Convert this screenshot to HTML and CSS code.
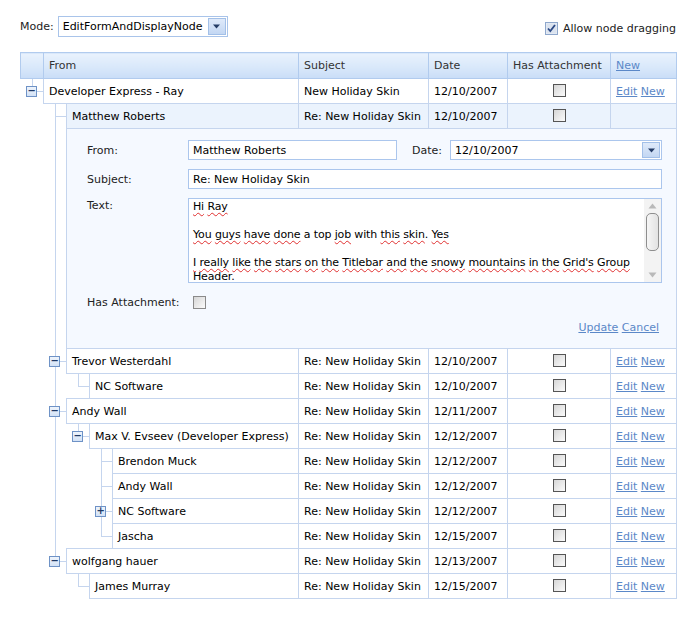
FILE: index.html
```html
<!DOCTYPE html>
<html>
<head>
<meta charset="utf-8">
<link rel="stylesheet" href="styles.css">
</head>
<body>
<div class="topbar">
  <div class="mode">
    <span class="lbl">Mode:</span>
    <div class="combo">
      <span class="combo-text">EditFormAndDisplayNode</span>
      <span class="ddbtn"><svg width="9" height="5" viewBox="0 0 9 5"><path d="M1 0.5h7l-3.5 4z" fill="#253c66"/></svg></span>
    </div>
  </div>
  <label class="drag">
    <span class="chk-checked"><svg width="13" height="13" viewBox="0 0 13 13"><rect x="0.5" y="0.5" width="12" height="12" fill="#e9eef6" stroke="#8ea7cc"/><rect x="1.5" y="1.5" width="10" height="10" fill="#dbe3ef"/><path d="M3 6.5l2.3 2.5 4.7-6" fill="none" stroke="#2c4a86" stroke-width="1.8"/></svg></span>
    <span>Allow node dragging</span>
  </label>
</div>

<table class="tree">
  <colgroup>
    <col class="c23"><col class="c23"><col class="c23"><col class="c23">
    <col class="cfrom"><col class="csub"><col class="cdate"><col class="catt"><col class="cact">
  </colgroup>
  <thead>
    <tr>
      <th class="hfirst"></th>
      <th colspan="4">From</th>
      <th>Subject</th>
      <th>Date</th>
      <th>Has Attachment</th>
      <th><a class="lnk" href="#">New</a></th>
    </tr>
  </thead>
  <tbody>
    <tr>
      <td class="ind e"><span class="btn">&#8722;</span></td>
      <td class="d" colspan="4">Developer Express - Ray</td>
      <td class="d">New Holiday Skin</td>
      <td class="d">12/10/2007</td>
      <td class="d cb"><span class="chk"></span></td>
      <td class="d"><a class="lnk" href="#">Edit</a> <a class="lnk" href="#">New</a></td>
    </tr>
    <tr class="editing">
      <td class="ind"></td>
      <td class="ind t"></td>
      <td class="d sel" colspan="3">Matthew Roberts</td>
      <td class="d sel">Re: New Holiday Skin</td>
      <td class="d sel">12/10/2007</td>
      <td class="d sel cb"><span class="chk"></span></td>
      <td class="d sel"></td>
    </tr>
    <tr>
      <td class="ind"></td>
      <td class="ind v"></td>
      <td class="formcell" colspan="7">
        <div class="ef">
          <div class="flbl">From:</div>
          <div class="frow">
            <div class="inp inp-from">Matthew Roberts</div>
            <div class="flbl date-lbl">Date:</div>
            <div class="inp inp-date"><span class="dtext">12/10/2007</span><span class="ddbtn small"><svg width="9" height="5" viewBox="0 0 9 5"><path d="M1 0.5h7l-3.5 4z" fill="#253c66"/></svg></span></div>
          </div>
          <div class="flbl">Subject:</div>
          <div class="inp">Re: New Holiday Skin</div>
          <div class="flbl top">Text:</div>
          <div class="memo">
            <div class="memo-text">
              <p><span class="sp">Hi</span> <span class="sp">Ray</span></p>
              <p>&nbsp;</p>
              <p><span class="sp">You</span> <span class="sp">guys</span> <span class="sp">have</span> <span class="sp">done</span> a top <span class="sp">job</span> with <span class="sp">this</span> <span class="sp">skin</span>. <span class="sp">Yes</span></p>
              <p>&nbsp;</p>
              <p><span class="sp">I</span> <span class="sp">really</span> <span class="sp">like</span> <span class="sp">the</span> <span class="sp">stars</span> <span class="sp">on</span> <span class="sp">the</span> <span class="sp">Titlebar</span> <span class="sp">and</span> <span class="sp">the</span> <span class="sp">snowy</span> <span class="sp">mountains</span> <span class="sp">in</span> <span class="sp">the</span> <span class="sp">Grid's</span> <span class="sp">Group</span> <span class="sp">Header</span>.</p>
            </div>
            <div class="sbar">
              <svg width="9" height="6" viewBox="0 0 9 6"><path d="M0.5 5.5h8l-4-5z" fill="#b9b9b9"/></svg>
              <div class="thumb"></div>
              <div class="sgrow"></div>
              <svg width="9" height="6" viewBox="0 0 9 6"><path d="M0.5 0.5h8l-4 5z" fill="#b9b9b9"/></svg>
            </div>
          </div>
          <div class="flbl">Has Attachment:</div>
          <div class="attrow"><span class="chk light"></span></div>
          <div class="factions"><a class="lnk" href="#">Update</a> <a class="lnk" href="#">Cancel</a></div>
        </div>
      </td>
    </tr>
    <tr>
      <td class="ind"></td>
      <td class="ind t"><span class="btn">&#8722;</span></td>
      <td class="d" colspan="3">Trevor Westerdahl</td>
      <td class="d">Re: New Holiday Skin</td>
      <td class="d">12/10/2007</td>
      <td class="d cb"><span class="chk"></span></td>
      <td class="d"><a class="lnk" href="#">Edit</a> <a class="lnk" href="#">New</a></td>
    </tr>
    <tr>
      <td class="ind"></td>
      <td class="ind v"></td>
      <td class="ind e"></td>
      <td class="d" colspan="2">NC Software</td>
      <td class="d">Re: New Holiday Skin</td>
      <td class="d">12/10/2007</td>
      <td class="d cb"><span class="chk"></span></td>
      <td class="d"><a class="lnk" href="#">Edit</a> <a class="lnk" href="#">New</a></td>
    </tr>
    <tr>
      <td class="ind"></td>
      <td class="ind t"><span class="btn">&#8722;</span></td>
      <td class="d" colspan="3">Andy Wall</td>
      <td class="d">Re: New Holiday Skin</td>
      <td class="d">12/11/2007</td>
      <td class="d cb"><span class="chk"></span></td>
      <td class="d"><a class="lnk" href="#">Edit</a> <a class="lnk" href="#">New</a></td>
    </tr>
    <tr>
      <td class="ind"></td>
      <td class="ind v"></td>
      <td class="ind e"><span class="btn">&#8722;</span></td>
      <td class="d" colspan="2">Max V. Evseev (Developer Express)</td>
      <td class="d">Re: New Holiday Skin</td>
      <td class="d">12/12/2007</td>
      <td class="d cb"><span class="chk"></span></td>
      <td class="d"><a class="lnk" href="#">Edit</a> <a class="lnk" href="#">New</a></td>
    </tr>
    <tr>
      <td class="ind"></td>
      <td class="ind v"></td>
      <td class="ind"></td>
      <td class="ind t"></td>
      <td class="d">Brendon Muck</td>
      <td class="d">Re: New Holiday Skin</td>
      <td class="d">12/12/2007</td>
      <td class="d cb"><span class="chk"></span></td>
      <td class="d"><a class="lnk" href="#">Edit</a> <a class="lnk" href="#">New</a></td>
    </tr>
    <tr>
      <td class="ind"></td>
      <td class="ind v"></td>
      <td class="ind"></td>
      <td class="ind t"></td>
      <td class="d">Andy Wall</td>
      <td class="d">Re: New Holiday Skin</td>
      <td class="d">12/12/2007</td>
      <td class="d cb"><span class="chk"></span></td>
      <td class="d"><a class="lnk" href="#">Edit</a> <a class="lnk" href="#">New</a></td>
    </tr>
    <tr>
      <td class="ind"></td>
      <td class="ind v"></td>
      <td class="ind"></td>
      <td class="ind t"><span class="btn">+</span></td>
      <td class="d">NC Software</td>
      <td class="d">Re: New Holiday Skin</td>
      <td class="d">12/12/2007</td>
      <td class="d cb"><span class="chk"></span></td>
      <td class="d"><a class="lnk" href="#">Edit</a> <a class="lnk" href="#">New</a></td>
    </tr>
    <tr>
      <td class="ind"></td>
      <td class="ind v"></td>
      <td class="ind"></td>
      <td class="ind e"></td>
      <td class="d">Jascha</td>
      <td class="d">Re: New Holiday Skin</td>
      <td class="d">12/15/2007</td>
      <td class="d cb"><span class="chk"></span></td>
      <td class="d"><a class="lnk" href="#">Edit</a> <a class="lnk" href="#">New</a></td>
    </tr>
    <tr>
      <td class="ind"></td>
      <td class="ind e"><span class="btn">&#8722;</span></td>
      <td class="d" colspan="3">wolfgang hauer</td>
      <td class="d">Re: New Holiday Skin</td>
      <td class="d">12/13/2007</td>
      <td class="d cb"><span class="chk"></span></td>
      <td class="d"><a class="lnk" href="#">Edit</a> <a class="lnk" href="#">New</a></td>
    </tr>
    <tr>
      <td class="ind"></td>
      <td class="ind"></td>
      <td class="ind e"></td>
      <td class="d" colspan="2">James Murray</td>
      <td class="d">Re: New Holiday Skin</td>
      <td class="d">12/15/2007</td>
      <td class="d cb"><span class="chk"></span></td>
      <td class="d"><a class="lnk" href="#">Edit</a> <a class="lnk" href="#">New</a></td>
    </tr>
  </tbody>
</table>
</body>
</html>
```
FILE: styles.css
```css
html, body {
  margin: 0;
  background: #fff;
}
body {
  padding: 16px 17px 0 20px;
  font-family: "DejaVu Sans", Verdana, sans-serif;
  font-size: 11px;
  color: #000;
}
.topbar {
  display: flex;
  justify-content: space-between;
  align-items: center;
  height: 21px;
}
.mode {
  display: flex;
  align-items: center;
}
.lbl { color: #222; }
.combo {
  margin-left: 4px;
  width: 170px;
  height: 21px;
  box-sizing: border-box;
  border: 1px solid #a9c4ea;
  display: flex;
  align-items: center;
  justify-content: space-between;
  padding: 0 1px 0 4px;
}
.ddbtn {
  width: 18px;
  height: 17px;
  box-sizing: border-box;
  border: 1px solid #a3c0e8;
  background: linear-gradient(#dfeafa, #c3d7f3);
  display: flex;
  align-items: center;
  justify-content: center;
}
.ddbtn.small { height: 16px; }
.drag {
  display: flex;
  align-items: center;
  gap: 5px;
  margin-top: 3px;
  color: #222;
}
.chk-checked { display: flex; }

.lnk {
  color: #5b88c8;
  text-decoration: underline;
}

.tree {
  margin-top: 15px;
  width: 656px;
  table-layout: fixed;
  border-collapse: collapse;
}
.c23 { width: 23px; }
.cfrom { width: 186px; }
.csub { width: 130px; }
.cdate { width: 79px; }
.catt { width: 103px; }
.cact { width: 66px; }

.tree th {
  height: 25px;
  padding: 0 5px;
  text-align: left;
  font-weight: normal;
  color: #333;
  background: linear-gradient(#e9f2fd, #d9e8fa 55%, #c9ddf7);
  border: 1px solid #b1cbee;
  white-space: nowrap;
}
.tree th.hfirst { padding: 0; }

.tree td {
  height: 24px;
  padding: 0;
  white-space: nowrap;
}
.tree td.d {
  border: 1px solid #c5d5ee;
  padding: 0 5px;
  overflow: hidden;
}
.tree td.sel { background: #ebf3fd; }
.tree td.cb { text-align: center; }

.ind {
  text-align: center;
  vertical-align: middle;
  background-repeat: no-repeat;
}
.ind.v {
  background-image: linear-gradient(#c5d5ee, #c5d5ee);
  background-position: 11px 0;
  background-size: 1px 100%;
}
.ind.t {
  background-image: linear-gradient(#c5d5ee, #c5d5ee), linear-gradient(#c5d5ee, #c5d5ee);
  background-position: 11px 0, 11px 12px;
  background-size: 1px 100%, 12px 1px;
}
.ind.e {
  background-image: linear-gradient(#c5d5ee, #c5d5ee), linear-gradient(#c5d5ee, #c5d5ee);
  background-position: 11px 0, 11px 12px;
  background-size: 1px 13px, 12px 1px;
}
.btn {
  display: inline-block;
  width: 9px;
  height: 9px;
  border: 1px solid #6e92c6;
  background: linear-gradient(#eef4fc, #d3e2f6);
  color: #1f3a66;
  font-size: 10px;
  line-height: 8px;
  text-align: center;
  vertical-align: middle;
  font-family: "DejaVu Sans", sans-serif;
  font-weight: bold;
  margin-top: -1px;
}
.chk {
  display: inline-block;
  width: 11px;
  height: 11px;
  border: 1px solid #555;
  background: linear-gradient(135deg, #d6d6d6, #fbfbfb);
  vertical-align: middle;
  margin-top: -2px;
}
.chk.light { border-color: #8a8a8a; margin-top: 0; }

.formcell {
  border: 1px solid #c5d5ee;
  background: #f5f9ff;
  vertical-align: top;
}
.ef {
  display: grid;
  grid-template-columns: 101px 1fr;
  row-gap: 9px;
  align-items: center;
  padding: 11px 14px 14px 20px;
}
.flbl { color: #222; }
.flbl.top { align-self: start; padding-top: 1px; }
.frow {
  display: flex;
  align-items: center;
}
.inp {
  height: 20px;
  box-sizing: border-box;
  border: 1px solid #abc6ed;
  background: #fff;
  padding: 0 4px;
  display: flex;
  align-items: center;
}
.inp-from { width: 209px; }
.date-lbl { margin-left: 15px; }
.inp-date {
  flex: 1;
  margin-left: 8px;
  justify-content: space-between;
  padding-right: 1px;
}
.memo {
  height: 85px;
  box-sizing: border-box;
  border: 1px solid #abc6ed;
  background: #fff;
  display: flex;
}
.memo-text {
  flex: 1;
  padding: 1px 2px 0 4px;
  line-height: 14px;
  overflow: hidden;
  white-space: normal;
  letter-spacing: -0.15px;
}
.memo-text p { margin: 0; }
.sp {
  text-decoration: underline wavy #e03030;
  text-decoration-thickness: 1px;
  text-underline-offset: 2px;
  text-decoration-skip-ink: none;
}
.sbar {
  width: 17px;
  background: #f3f3f3;
  display: flex;
  flex-direction: column;
  align-items: center;
  padding: 4px 0;
  box-sizing: border-box;
}
.thumb {
  margin-top: 4px;
  width: 13px;
  height: 38px;
  box-sizing: border-box;
  border: 1px solid #8e8e8e;
  border-radius: 5px;
  background: linear-gradient(90deg, #f6f6f6, #e2e2e2);
}
.sgrow { flex: 1; }
.attrow {
  height: 20px;
  display: flex;
  align-items: center;
  padding-left: 5px;
}
.factions {
  grid-column: 1 / -1;
  text-align: right;
  padding-right: 3px;
}
```
